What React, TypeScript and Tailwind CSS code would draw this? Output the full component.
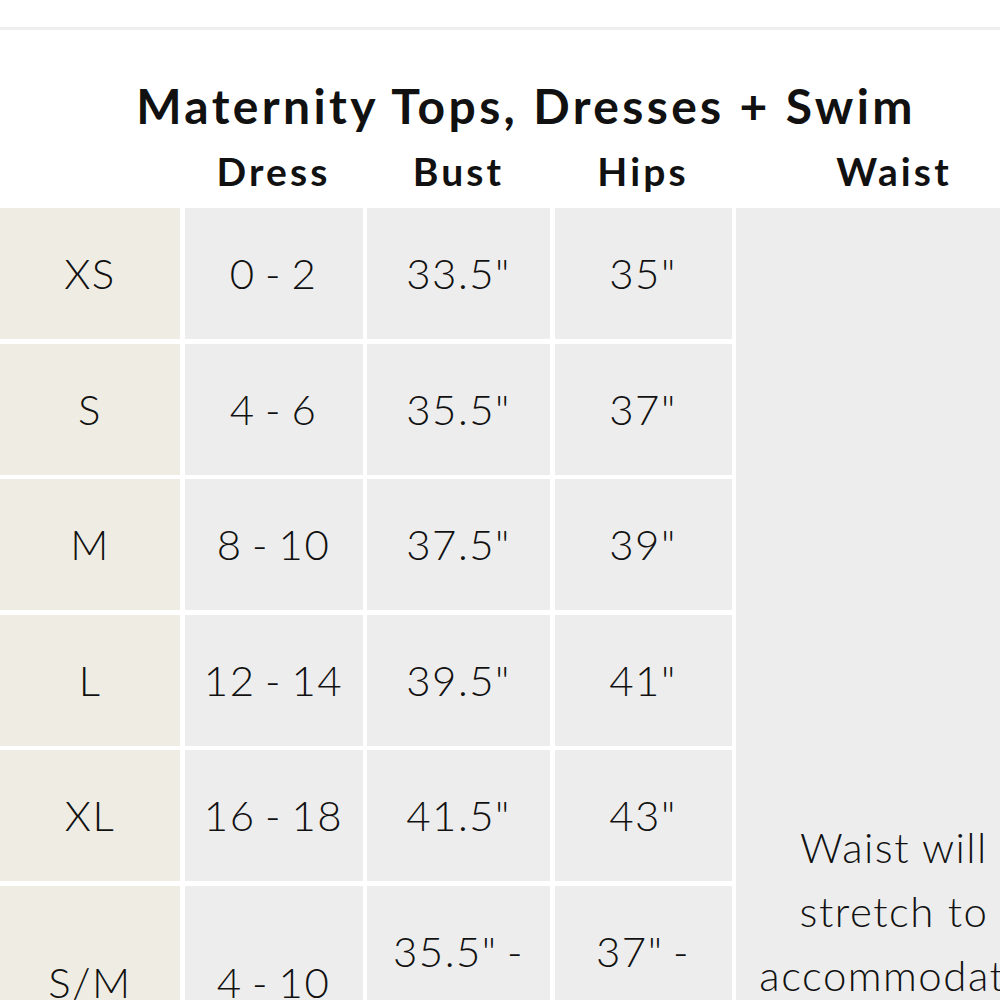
import React from "react";

const rows = [
  { size: "XS", dress: "0 - 2", bust: ["33.5\""], hips: ["35\""] },
  { size: "S", dress: "4 - 6", bust: ["35.5\""], hips: ["37\""] },
  { size: "M", dress: "8 - 10", bust: ["37.5\""], hips: ["39\""] },
  { size: "L", dress: "12 - 14", bust: ["39.5\""], hips: ["41\""] },
  { size: "XL", dress: "16 - 18", bust: ["41.5\""], hips: ["43\""] },
];

export default function App() {
  return (
    <div
      className="w-[1000px] h-[1000px] overflow-hidden bg-white text-[#111]"
      style={{ fontFamily: "Lato, 'Noto Sans', sans-serif" }}
    >
      <div className="h-[27px]" />
      <div className="h-[3px] bg-[#efefef]" />
      <div className="w-[1052px]">
        <div className="h-[50px]" />
        <h1 className="text-center text-[48px] leading-[52px] font-bold tracking-[0.07em]">
          Maternity Tops, Dresses + Swim
        </h1>
        <div className="grid grid-cols-[180px_178px_183px_177px_316px] gap-x-[4.5px] h-[76px] pt-[2px] items-center text-[39px] font-bold tracking-[0.08em]">
          <div />
          <div className="text-center">Dress</div>
          <div className="text-center">Bust</div>
          <div className="text-center">Hips</div>
          <div className="text-center">Waist</div>
        </div>
        <div className="grid grid-cols-[180px_178px_183px_177px_316px] grid-rows-[131px_131px_131px_131px_131px_190px] gap-[4.5px] text-[42px] font-light tracking-[0.035em] [word-spacing:-0.08em]">
          {rows.map((r, i) => (
            <React.Fragment key={r.size}>
              <div className="bg-[#efede3] flex items-center justify-center" style={{ gridRow: i + 1, gridColumn: 1 }}>
                {r.size}
              </div>
              <div className="bg-[#ededed] flex items-center justify-center" style={{ gridRow: i + 1, gridColumn: 2 }}>
                {r.dress}
              </div>
              <div className="bg-[#ededed] flex items-center justify-center" style={{ gridRow: i + 1, gridColumn: 3 }}>
                {r.bust[0]}
              </div>
              <div className="bg-[#ededed] flex items-center justify-center" style={{ gridRow: i + 1, gridColumn: 4 }}>
                {r.hips[0]}
              </div>
            </React.Fragment>
          ))}
          <div className="bg-[#efede3] flex items-center justify-center pt-[4px]" style={{ gridRow: 6, gridColumn: 1 }}>
            S/M
          </div>
          <div className="bg-[#ededed] flex items-center justify-center pt-[4px]" style={{ gridRow: 6, gridColumn: 2 }}>
            4 - 10
          </div>
          <div className="bg-[#ededed] flex flex-col items-center justify-center leading-[64px] pt-[4px]" style={{ gridRow: 6, gridColumn: 3 }}>
            <span>35.5" -</span>
            <span>37.5"</span>
          </div>
          <div className="bg-[#ededed] flex flex-col items-center justify-center leading-[64px] pt-[4px]" style={{ gridRow: 6, gridColumn: 4 }}>
            <span>37" -</span>
            <span>39"</span>
          </div>
          <div
            className="bg-[#ededed] flex flex-col items-center pt-[607px] leading-[64px] whitespace-nowrap [word-spacing:0]"
            style={{ gridRow: "1 / span 6", gridColumn: 5 }}
          >
            <span>Waist will</span>
            <span>stretch to</span>
            <span>accommodate</span>
            <span>growing belly</span>
          </div>
        </div>
      </div>
    </div>
  );
}
